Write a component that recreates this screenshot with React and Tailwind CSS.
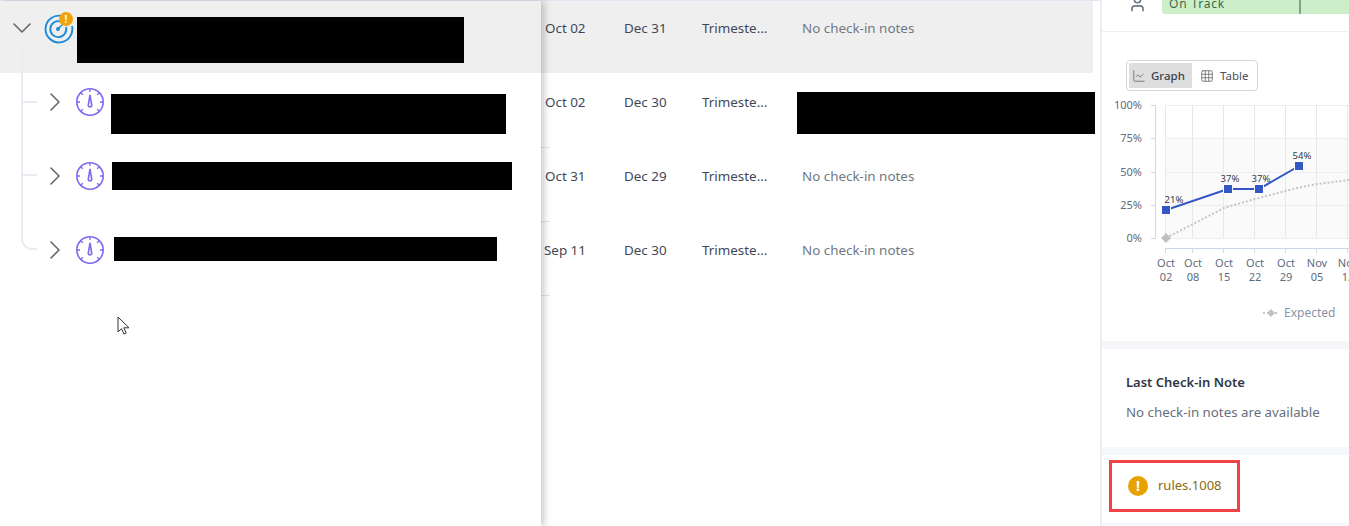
import React from "react";
import { ChevronDown, ChevronRight, User, ChartLine, Grid3x3 } from "lucide-react";

const font = { fontFamily: '"Noto Sans", sans-serif' };

function Gauge() {
  return (
    <svg width="30" height="30" viewBox="0 0 30 30" fill="none" stroke="#7c6cf0" strokeWidth="1.6" className="shrink-0">
      <circle cx="15" cy="15" r="13.2" />
      <path d="M15 2v3M2 15h3M25 15h3M5.8 5.8l2.1 2.1M24.2 5.8l-2.1 2.1M5.8 24.2l2.1-2.1M24.2 24.2l-2.1-2.1" strokeWidth="1.3" />
      <path d="M15 8l1.8 10.5a1.85 1.85 0 0 1-3.6 0z" />
    </svg>
  );
}

function Radar() {
  return (
    <div className="relative w-[30px] h-[30px] shrink-0">
      <svg width="30" height="30" viewBox="0 0 30 30" fill="none" stroke="#1b8ad8" strokeWidth="1.9">
        <path d="M18 2A13.4 13.4 0 1 0 28 12" />
        <path d="M17 7.6A8 8 0 1 0 22 13" />
        <path d="M14 14.8L19 10" strokeWidth="1.4" />
        <circle cx="14" cy="15" r="2" fill="#1b8ad8" stroke="none" />
      </svg>
      <span className="absolute left-[15px] top-[-2px] w-[14px] h-[14px] rounded-full bg-[#f0a30a] text-white text-[10px] leading-[14px] font-bold text-center">!</span>
    </div>
  );
}

const rows = [
  { start: "Oct 02", end: "Dec 31", note: "No check-in notes", active: true },
  { start: "Oct 02", end: "Dec 30", bar: "w-[395px] h-[40px] mt-[8px] ml-[6px]" },
  { start: "Oct 31", end: "Dec 29", note: "No check-in notes", bar: "w-[400px] h-[28px] mt-[2px] ml-[7px]" },
  { start: "Sep 11", end: "Dec 30", note: "No check-in notes", bar: "w-[383px] h-[24px] mt-[3px] ml-[9px]" },
];

function TreeRow({ r }) {
  if (r.active) {
    return (
      <div className="h-[72px] flex items-start bg-[#efefef] pl-[6px] pt-[11px]">
        <ChevronDown size={32} strokeWidth={1.2} color="#666" className="shrink-0" />
        <div className="ml-[6px] mt-[2px]"><Radar /></div>
        <div className="bg-black w-[387px] h-[46px] ml-[3px] mt-[5px]" />
      </div>
    );
  }
  return (
    <div className="h-[74px] flex items-start pl-[39px] pt-[13px] bg-white">
      <ChevronRight size={32} strokeWidth={1.2} color="#666" className="shrink-0" />
      <div className="ml-[4px] mt-[1px]"><Gauge /></div>
      <div className={`bg-black ${r.bar}`} />
    </div>
  );
}

function DataRow({ r, i }) {
  return (
    <div className={`${r.active ? "h-[72px] bg-[#efefef] pt-[17px]" : "h-[74px] pt-[19px]"} relative w-[552px] flex text-[13.4px] leading-5`}>
      <span className={`${i === 3 ? "w-[80px] ml-[3px]" : "w-[79px] ml-[4px]"} text-[#3f4857] shrink-0`}>{r.start}</span>
      <span className="w-[78px] text-[#3f4857] shrink-0">{r.end}</span>
      <span className="w-[100px] text-[#3f4857] shrink-0">Trimeste...</span>
      {r.note ? <span className="text-[#6f7785]">{r.note}</span> : <div className="w-[298px] h-[42px] bg-black ml-[-5px] shrink-0" />}
      {!r.active && <span className="absolute left-0 bottom-[-1px] w-[9px] h-px bg-[#e4e4e4]" />}
    </div>
  );
}

function Chart() {
  const xLabels = [[1166, "Oct", "02"], [1193, "Oct", "08"], [1224, "Oct", "15"], [1255, "Oct", "22"], [1286, "Oct", "29"], [1317, "Nov", "05"], [1348, "Nov", "12"]];
  const X = (v) => v - 1102;
  const Y = (v) => v - 95;
  return (
    <svg width="247" height="235" className="block" style={{ fontFamily: '"Noto Sans", sans-serif' }}>
      <rect x={X(1166)} y={Y(138)} width="182" height="100" fill="#fafafb" />
      {[105, 138, 172, 205, 238].map((y) => <line key={y} x1={X(1165)} x2="247" y1={Y(y) + 0.5} y2={Y(y) + 0.5} stroke="#eceef2" />)}
      {[1166, 1193, 1224, 1255, 1286, 1317, 1348].map((x) => <line key={x} x1={X(x) - 0.5} x2={X(x) - 0.5} y1={Y(105)} y2={Y(238)} stroke="#e6e8ec" />)}
      <path d={`M${X(1155.5)} ${Y(105)}V${Y(238.5)}`} stroke="#cdd8ea" strokeWidth="1" />
      {[105, 138, 172, 205, 238].map((y) => <line key={y} x1={X(1151)} x2={X(1155.5)} y1={Y(y) + 0.5} y2={Y(y) + 0.5} stroke="#cdd8ea" />)}
      {[["100%", 105], ["75%", 138], ["50%", 172], ["25%", 205], ["0%", 238]].map(([t, y]) => (
        <text key={t} x={X(1142)} y={Y(y) + 4} textAnchor="end" fontSize="11" fill="#5f6b7c">{t}</text>
      ))}
      <line x1={X(1165)} x2="247" y1={Y(248) + 0.5} y2={Y(248) + 0.5} stroke="#cdd8ea" />
      {xLabels.map(([x, a, b]) => (
        <g key={x}>
          <line x1={X(x) - 0.5} x2={X(x) - 0.5} y1={Y(248)} y2={Y(253)} stroke="#cdd8ea" />
          <text x={X(x)} y={Y(267)} textAnchor="middle" fontSize="11" fill="#5f6b7c">{a}</text>
          <text x={X(x)} y={Y(281)} textAnchor="middle" fontSize="11" fill="#5f6b7c">{b}</text>
        </g>
      ))}
      <polyline points={`${X(1166)},${Y(238)} ${X(1224)},${Y(208)} ${X(1255)},${Y(199)} ${X(1297)},${Y(188)} ${X(1317)},${Y(184)} ${X(1349)},${Y(180)}`} fill="none" stroke="#c4c4c8" strokeWidth="2" strokeDasharray="2 2" />
      <path d={`M${X(1166)} ${Y(233)}l5 5l-5 5l-5-5z`} fill="#c0c0c4" />
      <polyline points={`${X(1166)},${Y(210)} ${X(1228)},${Y(189)} ${X(1259)},${Y(189)} ${X(1299)},${Y(166)}`} fill="none" stroke="#3557c5" strokeWidth="2" />
      {[[1166, 210], [1228, 189], [1259, 189], [1299, 166]].map(([x, y]) => (
        <rect key={x} x={X(x) - 4.5} y={Y(y) - 4.5} width="9" height="9" fill="#3557c5" stroke="#fff" strokeWidth="1" />
      ))}
      {[[1174, 203, "21%"], [1230, 182, "37%"], [1261, 182, "37%"], [1302, 159, "54%"]].map(([x, y, t]) => (
        <text key={x} x={X(x)} y={Y(y)} textAnchor="middle" fontSize="9.5" fill="#333b48">{t}</text>
      ))}
      <line x1={X(1263)} x2={X(1277)} y1={Y(313)} y2={Y(313)} stroke="#c4c4c8" strokeWidth="2" strokeDasharray="2 2" />
      <path d={`M${X(1271)} ${Y(309)}l4 4l-4 4l-4-4z`} fill="#c0c0c4" />
      <text x={X(1284)} y={Y(317)} fontSize="12" fill="#8a94a6">Expected</text>
    </svg>
  );
}

function Divider() {
  return <div className="h-2 bg-[#f5f7fa] shrink-0" />;
}

export default function App() {
  return (
    <div className="relative w-[1349px] h-[526px] flex overflow-hidden bg-white" style={font}>
      <div className="w-[1100px] shrink-0 flex flex-col">
        <div className="h-[1px] bg-[#dfe8f2] shrink-0" />
        <div className="flex relative">
          <div className="w-[541px] shrink-0 z-10 relative bg-white shadow-[3px_0_7px_rgba(0,0,0,0.22)] h-[525px]">
            {rows.map((r, i) => <TreeRow key={i} r={r} />)}
            <svg width="30" height="215" className="absolute left-[18px] top-[42px] pointer-events-none" fill="none" stroke="#e8edf3" strokeWidth="2">
              <path d="M4 0V196a10 10 0 0 0 10 10H19M4 59H19M4 132H19" />
            </svg>
            <svg width="14" height="20" viewBox="0 0 14 20" className="absolute left-[117px] top-[315px]">
              <path d="M1 1v15l3.5-3.3 2.4 5.3 2.3-1-2.4-5.2H12z" fill="#fff" stroke="#333" strokeWidth="1" />
            </svg>
          </div>
          <div className="flex flex-col">
            {rows.map((r, i) => <DataRow key={i} r={r} i={i} />)}
          </div>
        </div>
      </div>

      <div className="w-[249px] shrink-0 border-l-2 border-[#eaeff5] flex flex-col">
        <div className="h-[32px] shrink-0 border-b border-[#edf0f4] flex items-start pl-[26px]">
          <User size={19} strokeWidth={2} color="#6d7580" className="mt-[-6px] shrink-0" />
          <div className="ml-[15px] w-[187px] h-[14px] bg-[#ccefca] rounded-bl-[3px] overflow-hidden">
            <div className="w-[139px] h-[14px] border-r-2 border-[#8b9d8c] overflow-hidden">
              <span className="block pl-[7px] mt-[-3px] text-[12px] leading-[14px] tracking-[0.8px] text-[#3c6b46]">On Track</span>
            </div>
          </div>
        </div>
        <div className="h-[309px] shrink-0 flex flex-col">
          <div className="mt-[28px] ml-[24px] w-[132px] h-[31px] border border-[#d3d5d9] rounded-[4px] flex items-center p-[2px] text-[11.5px] shrink-0">
            <span className="h-[25px] w-[63px] bg-[#dedede] flex items-center pl-[3px] gap-[5px] text-[#3a4250] font-medium">
              <ChartLine size={14} strokeWidth={1.2} color="#555" />Graph
            </span>
            <span className="flex items-center pl-[8px] gap-[6px] text-[#4a5261]">
              <Grid3x3 size={14} strokeWidth={1.2} color="#555" />Table
            </span>
          </div>
          <div className="mt-[4px]"><Chart /></div>
        </div>
        <Divider />
        <div className="h-[98px] shrink-0 pl-[24px] pt-[23px]">
          <div className="text-[13px] leading-5 font-semibold text-[#2f3744]">Last Check-in Note</div>
          <div className="mt-[10px] text-[13.3px] leading-5 text-[#666f7d]">No check-in notes are available</div>
        </div>
        <Divider />
        <div className="ml-[7px] mt-[5px] w-[131px] h-[52px] border-[3px] border-[#f04048] flex items-center pl-[16px] gap-[10px] shrink-0">
          <span className="w-5 h-5 rounded-full bg-[#e8a200] text-white text-[14px] leading-5 font-bold text-center">!</span>
          <span className="text-[13px] text-[#8a6a12]">rules.1008</span>
        </div>
        <div className="mt-[11px] flex-1 bg-[#f5f7fa]" />
      </div>
    </div>
  );
}
